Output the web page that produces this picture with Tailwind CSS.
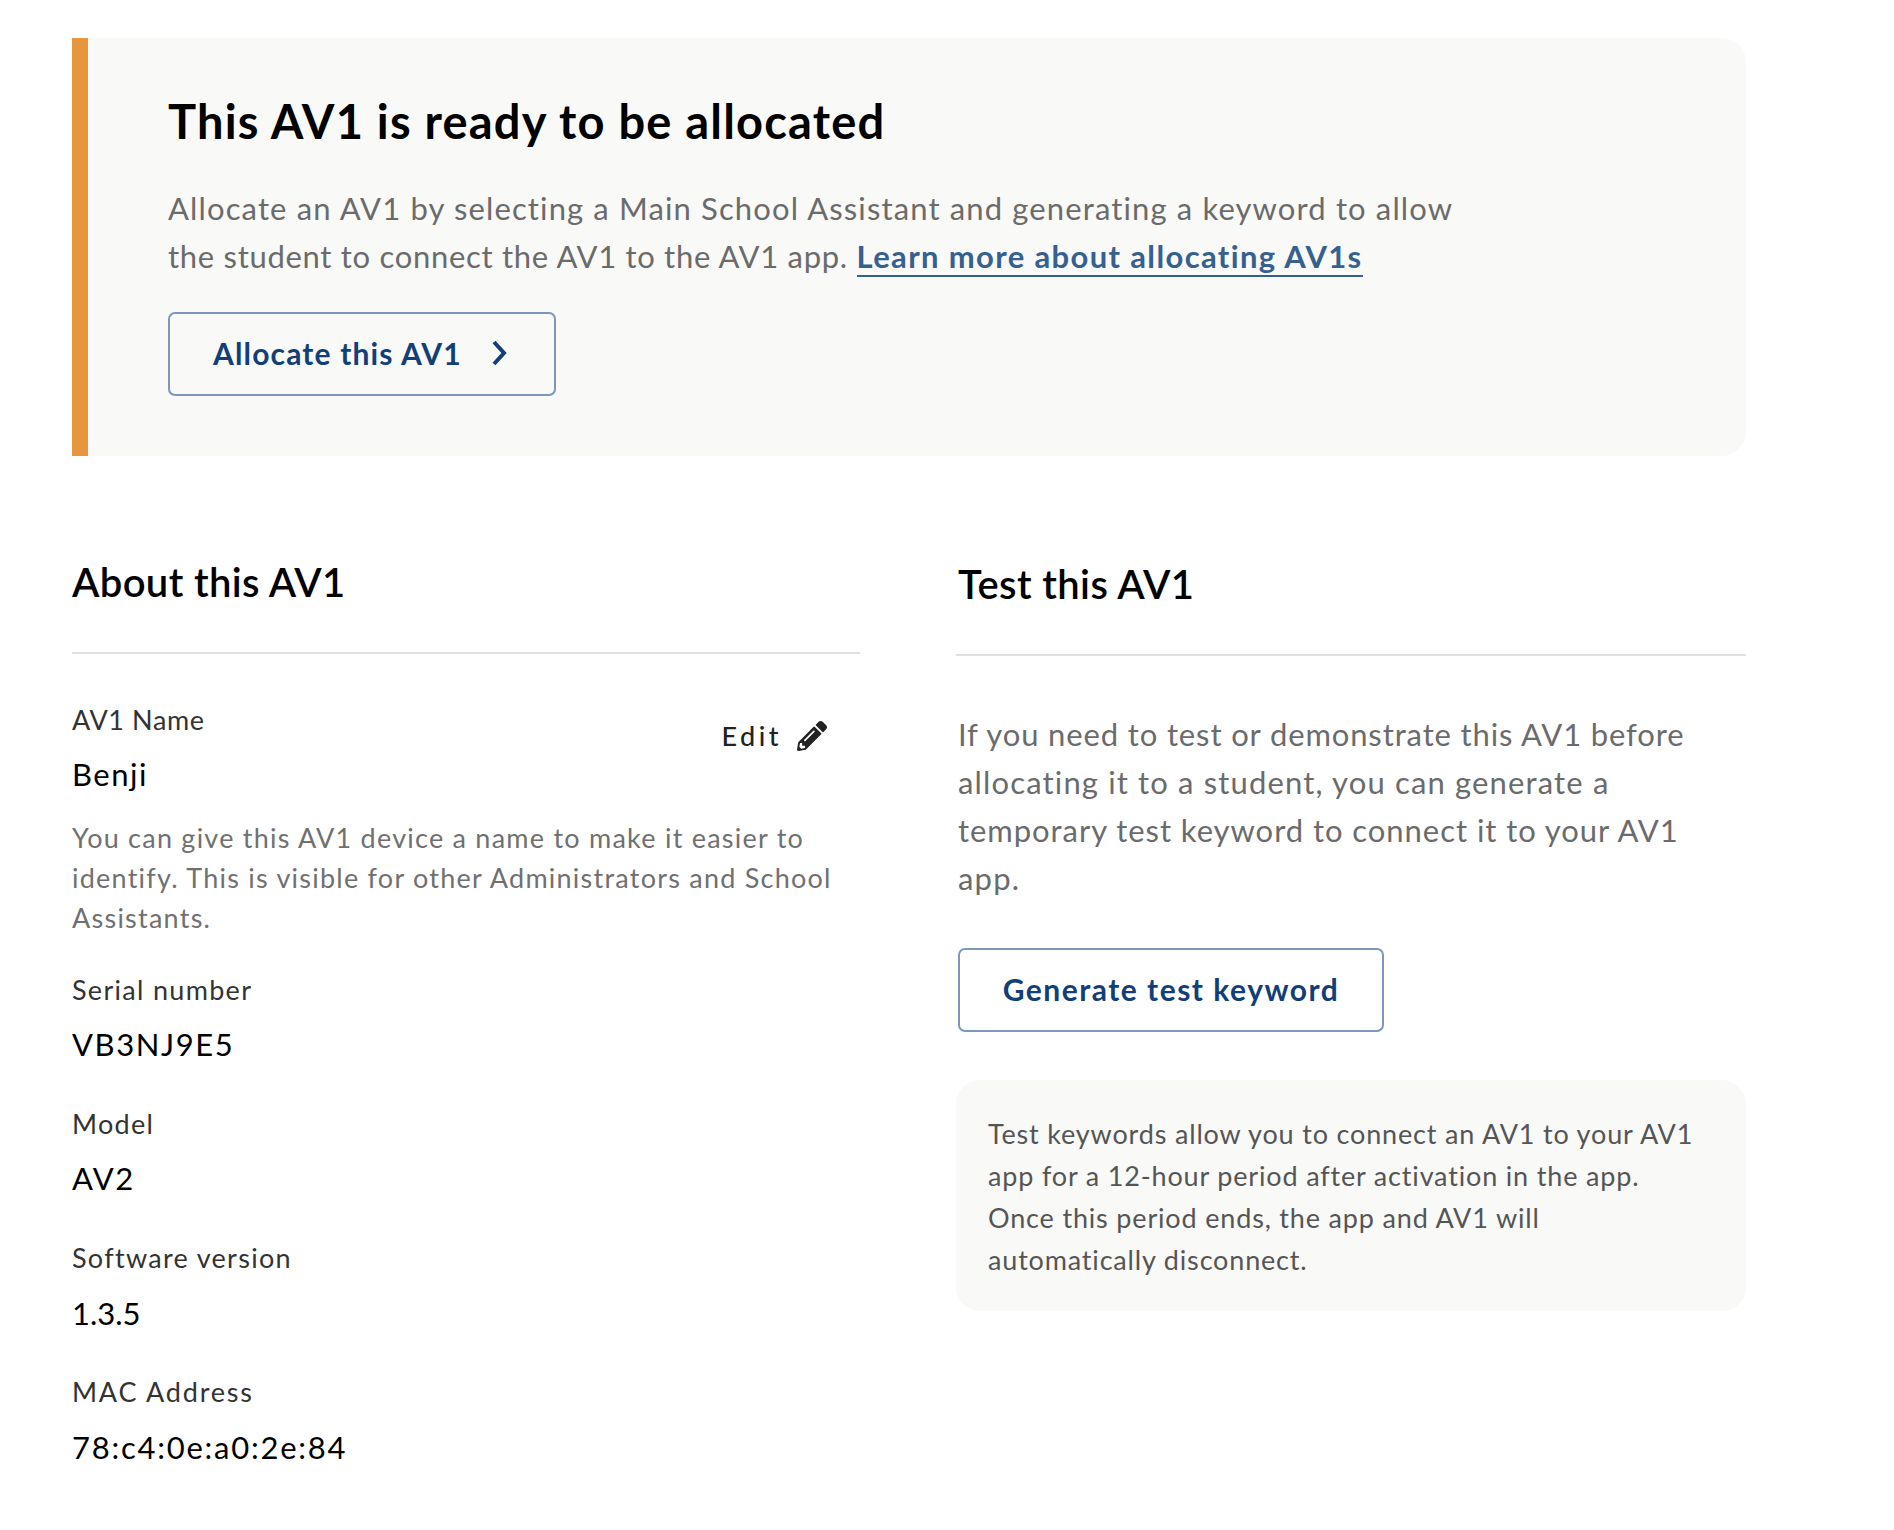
<!DOCTYPE html>
<html lang="en">
<head>
    <meta charset="UTF-8">
    <title>AV1 details</title>
    <script src="https://cdn.jsdelivr.net/npm/@tailwindcss/browser@4"></script>
</head>
<body class="bg-white font-['Lato',sans-serif] text-black">
    <div class="w-[1674px] ml-[72px] pt-[38px] pb-[60px]">
        <section class="h-[418px] bg-[#f9f9f7] border-l-[16px] border-[#e8963e] rounded-r-[24px] pl-[80px] pt-[53px]">
            <h1 class="text-[47px] leading-[60px] font-bold tracking-[1.2px]">This AV1 is ready to be allocated</h1>
            <p class="mt-[33px] w-[1300px] text-[31px] leading-[48px] text-[#6b6b6b]">
                <span class="block tracking-[1.13px]">Allocate an AV1 by selecting a Main School Assistant and generating a keyword to allow</span>
                <span class="block tracking-[0.7px]">the student to connect the AV1 to the AV1 app.
                <a href="#" class="font-bold tracking-[1.35px] text-[#35608f] border-b-2 border-[#35608f]">Learn more about allocating AV1s</a></span>
            </p>
            <button class="mt-[32px] w-[388px] h-[84px] flex items-center pl-[43px] pb-[2px] border-2 border-[#7b97bb] rounded-[7px] text-[30px] font-bold tracking-[1.15px] text-[#123f78]">
                Allocate this AV1
                <svg class="ml-[28px]" width="18" height="26" viewBox="0 0 18 26" fill="none" stroke="#123f78" stroke-width="4"><path d="M4 2l10 11-10 11"/></svg>
            </button>
        </section>

        <div class="grid grid-cols-[788px_790px] gap-x-[96px] mt-[100px]">
            <section>
                <h2 class="text-[40px] leading-[52px] font-semibold tracking-[0.35px] border-b-2 border-[#e0e0e0] h-[98px]">About this AV1</h2>
                <div class="relative pt-[48px]">
                    <div class="absolute right-[33px] top-[62px] flex items-center gap-[15px] text-[27px] font-medium tracking-[3.5px] text-[#222]">
                        Edit
                        <svg width="30" height="30" viewBox="0 0 512 512" fill="#222"><path d="M497.9 142.1l-46.1 46.1c-4.7 4.7-12.3 4.7-17 0l-111-111c-4.7-4.7-4.7-12.3 0-17l46.1-46.1c18.7-18.7 49.1-18.7 67.9 0l60.1 60.1c18.8 18.7 18.8 49.1 0 67.9zM284.2 99.8L21.6 362.4.4 483.9c-2.9 16.4 11.4 30.6 27.8 27.8l121.5-21.3 262.6-262.6c4.7-4.7 4.7-12.3 0-17l-111-111c-4.8-4.7-12.4-4.7-17.1 0zM124.1 339.9c-5.5-5.5-5.5-14.3 0-19.8l154-154c5.5-5.5 14.3-5.5 19.8 0s5.5 14.3 0 19.8l-154 154c-5.5 5.5-14.3 5.5-19.8 0zM88 424h48v36.3l-64.5 11.3-31.1-31.1L51.7 376H88v48z"/></svg>
                    </div>
                    <div class="text-[27px] leading-[36px] tracking-[0.6px] text-[#333]">AV1 Name</div>
                    <div class="mt-[17px] text-[31px] leading-[38px] tracking-[1.5px]">Benji</div>
                    <p class="mt-[25px] text-[27px] leading-[40px] tracking-[1.24px] text-[#707070]">You can give this AV1 device a name to make it easier to identify. This is visible for other Administrators and School Assistants.</p>

                    <div class="mt-[34px] text-[27px] leading-[36px] tracking-[1.3px] text-[#333]">Serial number</div>
                    <div class="mt-[17px] text-[31px] leading-[38px] tracking-[1.6px]">VB3NJ9E5</div>

                    <div class="mt-[43px] text-[27px] leading-[36px] tracking-[1.3px] text-[#333]">Model</div>
                    <div class="mt-[17px] text-[31px] leading-[38px] tracking-[1.5px]">AV2</div>

                    <div class="mt-[43px] text-[27px] leading-[36px] tracking-[1.3px] text-[#333]">Software version</div>
                    <div class="mt-[18px] text-[31px] leading-[38px]">1.3.5</div>

                    <div class="mt-[42px] text-[27px] leading-[36px] tracking-[1.8px] text-[#333]">MAC Address</div>
                    <div class="mt-[18px] text-[31px] leading-[38px] tracking-[1.75px]">78:c4:0e:a0:2e:84</div>
                </div>
            </section>

            <section>
                <h2 class="text-[40px] leading-[52px] font-semibold tracking-[0.4px] border-b-2 border-[#e0e0e0] h-[100px] pt-[2px] pl-[2px]">Test this AV1</h2>
                <p class="mt-[54px] pl-[2px] text-[31px] leading-[48px] text-[#6b6b6b]">
                    <span class="block tracking-[0.87px]">If you need to test or demonstrate this AV1 before</span>
                    <span class="block tracking-[1.15px]">allocating it to a student, you can generate a</span>
                    <span class="block tracking-[0.95px]">temporary test keyword to connect it to your AV1</span>
                    <span class="block tracking-[1.2px]">app.</span>
                </p>
                <button class="mt-[46px] ml-[2px] w-[426px] h-[84px] pb-[2px] border-2 border-[#7b97bb] rounded-[7px] text-[30px] font-bold tracking-[1.5px] text-[#123f78]">Generate test keyword</button>
                <div class="mt-[48px] bg-[#f9f9f7] rounded-[24px] pl-[32px] pr-[46px] pt-[33px] pb-[30px] text-[27px] leading-[42px] tracking-[0.83px] text-[#555]">Test keywords allow you to connect an AV1 to your AV1 app for a 12-hour period after activation in the app. Once this period ends, the app and AV1 will automatically disconnect.</div>
            </section>
        </div>
    </div>
</body>
</html>
